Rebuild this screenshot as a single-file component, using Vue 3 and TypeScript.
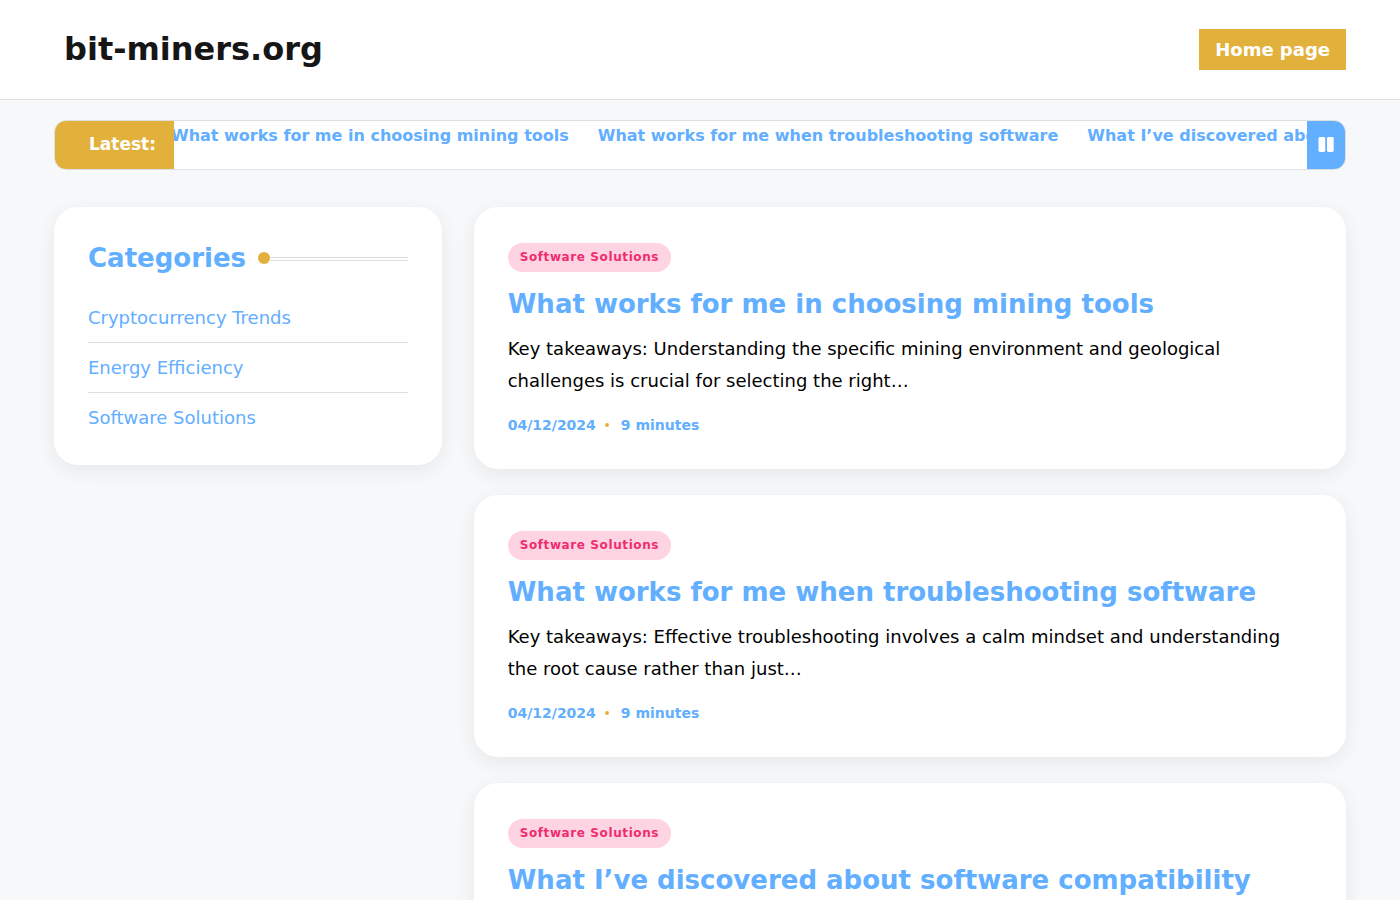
<script setup lang="ts">
interface Post {
  title: string
  excerpt: string
  date: string
  minutes: number
}

const categories: string[] = ['Cryptocurrency Trends', 'Energy Efficiency', 'Software Solutions']

const posts: Post[] = [
  {
    title: 'What works for me in choosing mining tools',
    excerpt: 'Key takeaways: Understanding the specific mining environment and geological challenges is crucial for selecting the right…',
    date: '04/12/2024',
    minutes: 9,
  },
  {
    title: 'What works for me when troubleshooting software',
    excerpt: 'Key takeaways: Effective troubleshooting involves a calm mindset and understanding the root cause rather than just…',
    date: '04/12/2024',
    minutes: 9,
  },
  {
    title: 'What I’ve discovered about software compatibility',
    excerpt: '',
    date: '',
    minutes: 0,
  },
]
</script>

<template>
  <div class="page">
    <header class="header">
      <div class="container header-row">
        <a class="brand" href="#">bit-miners.org</a>
        <a class="home" href="#">Home page</a>
      </div>
    </header>

    <div class="container">
      <section class="ticker">
        <div class="ticker-label">Latest:</div>
        <div class="ticker-track">
          <a v-for="post in posts" :key="post.title" href="#">{{ post.title }}</a>
        </div>
        <button class="pause" type="button" aria-label="Pause">
          <svg width="16" height="15" viewBox="0 0 16 15" aria-hidden="true">
            <rect x="0.5" y="0" width="6.7" height="15" rx="1.4" fill="#fff" />
            <rect x="9" y="0" width="6.7" height="15" rx="1.4" fill="#fff" />
          </svg>
        </button>
      </section>

      <div class="layout">
        <aside class="card sidebar">
          <h2 class="widget-title">Categories</h2>
          <ul class="categories">
            <li v-for="category in categories" :key="category"><a href="#">{{ category }}</a></li>
          </ul>
        </aside>

        <main class="posts">
          <article v-for="post in posts" :key="post.title" class="card post">
            <a class="badge" href="#">Software Solutions</a>
            <h2 class="post-title"><a href="#">{{ post.title }}</a></h2>
            <p v-if="post.excerpt" class="excerpt">{{ post.excerpt }}</p>
            <div v-if="post.date" class="meta">
              <a href="#">{{ post.date }}</a>
              <span class="dot"></span>
              <span>{{ post.minutes }} minutes</span>
            </div>
          </article>
        </main>
      </div>
    </div>
  </div>
</template>

<style>
body {
  margin: 0;
  background: #f7f8fa;
}
</style>

<style scoped>
.page {
  height: 100vh;
  overflow: hidden;
  background: #f7f8fa;
  color: #000;
  font-family: "DejaVu Sans", sans-serif;
  font-size: 18px;
  line-height: 32px;
}
.page * {
  box-sizing: border-box;
}
a {
  color: #62aeff;
  text-decoration: none;
}
.container {
  padding: 0 54px;
}
.header {
  background: #fff;
  border-bottom: 1px solid #dedfe1;
}
.header-row {
  display: flex;
  align-items: center;
  justify-content: space-between;
  height: 99px;
}
.brand {
  padding: 0 10px 2px;
  color: #161616;
  font-size: 32px;
  font-weight: bold;
}
.home {
  padding: 0 16px;
  background: #e2b13c;
  color: #fff;
  font-weight: bold;
  line-height: 41px;
}
.ticker {
  display: flex;
  height: 50px;
  margin: 20px 0 37px;
  overflow: hidden;
  background: #fff;
  border: 1px solid #dedfe1;
  border-radius: 12px;
}
.ticker-label {
  flex: none;
  width: 119px;
  padding-left: 34px;
  background: #e2b13c;
  color: #fff;
  font-size: 17px;
  font-weight: bold;
  line-height: 46px;
}
.ticker-track {
  display: flex;
  flex: 1;
  gap: 29px;
  min-width: 0;
  overflow: hidden;
  white-space: nowrap;
}
.ticker-track a {
  font-size: 16px;
  font-weight: bold;
  line-height: 29px;
}
/* The running line has already scrolled slightly under the label. */
.ticker-track a:first-child {
  margin-left: -3px;
}
.pause {
  display: flex;
  flex: none;
  align-items: center;
  justify-content: center;
  width: 38px;
  padding: 0 0 2px;
  border: 0;
  background: #62aeff;
}
.layout {
  display: grid;
  grid-template-columns: 4fr 9fr;
  gap: 32px;
  align-items: start;
}
.card {
  background: #fff;
  border-radius: 24px;
  box-shadow: 0 5px 20px rgba(0, 0, 0, 0.07);
}
.sidebar {
  padding: 32px 34px 22px;
}
.widget-title {
  display: flex;
  align-items: center;
  margin: 0 0 16px;
  color: #62aeff;
  font-size: 26px;
  line-height: 38px;
}
.widget-title::before {
  content: "";
  order: 1;
  width: 12px;
  height: 12px;
  margin-left: 12px;
  border-radius: 50%;
  background: #e2b13c;
}
.widget-title::after {
  content: "";
  order: 2;
  flex: 1;
  height: 2px;
  margin-top: 2px;
  border: solid #dedfe1;
  border-width: 1px 0;
}
.categories {
  margin: 0;
  padding: 0;
  list-style: none;
}
.categories li {
  height: 50px;
  padding-top: 9px;
  border-bottom: 1px solid #dedfe1;
}
.categories li:last-child {
  border-bottom: 0;
}
.posts {
  display: grid;
  gap: 26px;
}
.post {
  min-height: 262px;
  padding: 36px 34px 28px;
}
.badge {
  display: block;
  width: fit-content;
  padding: 0 12px;
  border-radius: 15px;
  background: #ffd4e2;
  color: #f02c70;
  font-size: 12px;
  font-weight: bold;
  letter-spacing: 0.05em;
  line-height: 29px;
}
.post-title {
  margin: 14px 0 11px;
  font-size: 26px;
  line-height: 36px;
}
.excerpt {
  margin: 0 0 12px;
}
.meta {
  display: flex;
  align-items: center;
  color: #62aeff;
  font-size: 14px;
  font-weight: bold;
}
.dot {
  width: 4px;
  height: 4px;
  margin: 0 12px 0 9px;
  border-radius: 50%;
  background: #e2b13c;
}
</style>
